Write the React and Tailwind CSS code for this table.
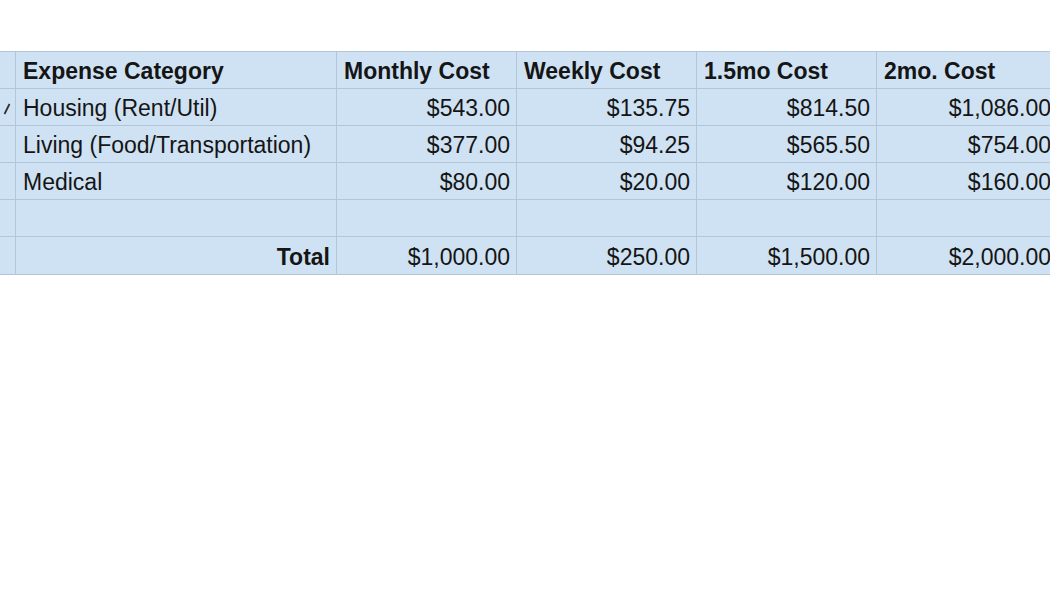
import React from "react";

const rows = [
  { cat: "Housing (Rent/Util)", v: ["$543.00", "$135.75", "$814.50", "$1,086.00"], mark: true },
  { cat: "Living (Food/Transportation)", v: ["$377.00", "$94.25", "$565.50", "$754.00"] },
  { cat: "Medical", v: ["$80.00", "$20.00", "$120.00", "$160.00"] },
  { cat: "", v: ["", "", "", ""] },
];

const cell = "bg-[#cfe2f3] h-[36px] flex items-center pt-[2px]";

export default function App() {
  return (
    <div
      className="w-[1050px] h-[593px] bg-white overflow-hidden text-[23px] text-[#151515]"
      style={{ fontFamily: '"Liberation Sans", Arial, sans-serif' }}
    >
      <div className="mt-[51px] w-[1120px] grid grid-cols-[15px_320px_179px_179px_179px_244px] grid-rows-[36px_36px_36px_36px_36px_37px] gap-px bg-[#b3c6d9] py-px">
        {/* header */}
        <div className={cell}></div>
        <div className={`${cell} px-[7px] font-bold`}>Expense Category</div>
        <div className={`${cell} px-[7px] font-bold`}>Monthly Cost</div>
        <div className={`${cell} px-[7px] font-bold`}>Weekly Cost</div>
        <div className={`${cell} px-[7px] font-bold`}>1.5mo Cost</div>
        <div className={`${cell} px-[7px] font-bold`}>2mo. Cost</div>

        {rows.map((r, i) => (
          <React.Fragment key={i}>
            <div className={`${cell} justify-end`}>
              {r.mark && (
                <svg width="8" height="12" viewBox="0 0 8 12" className="mr-[4px] mt-[2px]">
                  <path d="M1.5 11 L6.5 1" stroke="#333" strokeWidth="1.8" fill="none" />
                </svg>
              )}
            </div>
            <div className={`${cell} px-[7px]`}>{r.cat}</div>
            {r.v.map((x, j) => (
              <div key={j} className={`${cell} justify-end ${j === 3 ? "pr-[70px]" : "pr-[6px]"}`}>
                {x}
              </div>
            ))}
          </React.Fragment>
        ))}

        {/* total */}
        <div className="bg-[#cfe2f3]"></div>
        <div className="bg-[#cfe2f3] flex items-center pt-[4px] justify-end pr-[6px] font-bold">Total</div>
        <div className="bg-[#cfe2f3] flex items-center pt-[4px] justify-end pr-[6px]">$1,000.00</div>
        <div className="bg-[#cfe2f3] flex items-center pt-[4px] justify-end pr-[6px]">$250.00</div>
        <div className="bg-[#cfe2f3] flex items-center pt-[4px] justify-end pr-[6px]">$1,500.00</div>
        <div className="bg-[#cfe2f3] flex items-center pt-[4px] justify-end pr-[70px]">$2,000.00</div>
      </div>
    </div>
  );
}
